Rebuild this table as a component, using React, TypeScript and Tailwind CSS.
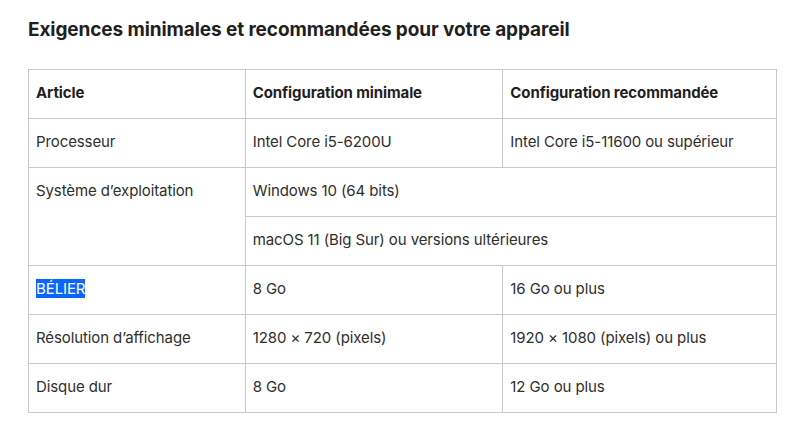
const ROWS = [
  { item: "Processeur", min: "Intel Core i5-6200U", rec: "Intel Core i5-11600 ou supérieur" },
  { item: "BÉLIER", min: "8 Go", rec: "16 Go ou plus", selected: true },
  { item: "Résolution d’affichage", min: "1280 × 720 (pixels)", rec: "1920 × 1080 (pixels) ou plus" },
  { item: "Disque dur", min: "8 Go", rec: "12 Go ou plus" },
];

const cell = "border border-[#c9c9c9] pl-[7px] pr-2 pb-[2px] h-[49px] align-middle";

export default function App() {
  const [cpu, ram, screen, disk] = ROWS;

  const row = (r: (typeof ROWS)[number]) => (
    <tr key={r.item}>
      <td className={cell}>
        {r.selected ? <span className="bg-[#0a66ff] text-white">{r.item}</span> : r.item}
      </td>
      <td className={cell}>{r.min}</td>
      <td className={cell}>{r.rec}</td>
    </tr>
  );

  return (
    <div className="w-[804px] h-[427px] bg-white px-7 pt-[17px] text-[#2e2e2e]" style={{ fontFamily: "Inter, 'Noto Sans', sans-serif" }}>
      <h2 className="text-[19px] font-bold text-[#1f1f1f] leading-[26px] tracking-[-0.1px]">
        Exigences minimales et recommandées pour votre appareil
      </h2>

      <table className="mt-[26px] w-[749px] border-collapse text-[15px] tracking-[-0.1px]">
        <colgroup>
          <col className="w-[217px]" />
          <col className="w-[258px]" />
          <col className="w-[274px]" />
        </colgroup>
        <thead>
          <tr className="font-bold text-[#1f1f1f]">
            <td className={cell}>Article</td>
            <td className={cell}>Configuration minimale</td>
            <td className={cell}>Configuration recommandée</td>
          </tr>
        </thead>
        <tbody>
          {row(cpu)}
          <tr>
            <td rowSpan={2} className="border border-[#c9c9c9] pl-[7px] pr-2 pt-[12px] align-top">
              Système d’exploitation
            </td>
            <td colSpan={2} className={cell}>Windows 10 (64 bits)</td>
          </tr>
          <tr>
            <td colSpan={2} className={cell}>macOS 11 (Big Sur) ou versions ultérieures</td>
          </tr>
          {row(ram)}
          {row(screen)}
          {row(disk)}
        </tbody>
      </table>
    </div>
  );
}
